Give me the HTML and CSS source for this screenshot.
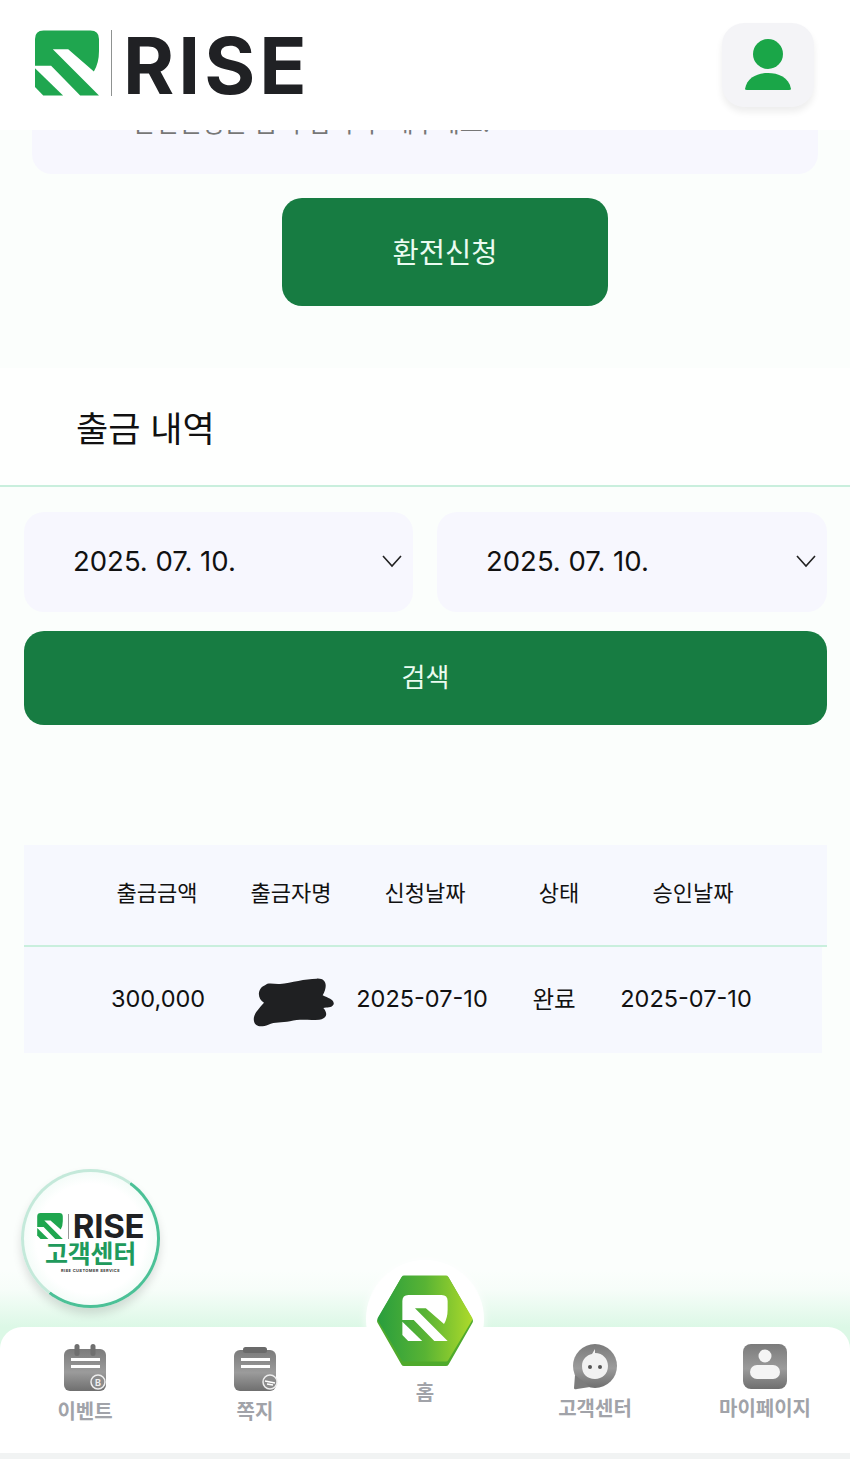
FILE: index.html
```html
<!DOCTYPE html>
<html lang="ko">
  <head>
    <meta charset="utf-8">
    <title>RISE</title>
    <link rel="stylesheet" href="styles.css">
  </head>

  <body>
    <svg class="defs" width="0" height="0">
      <defs>
        <symbol id="r-mark" viewBox="18 15 187 190">
          <path d="M18 40 Q18 15 43 15 L180 15 Q205 15 205 40 L205 75 Q205 110 190 135 L115 70 L70 70 L205 205 L150 205 L65 118 L18 118 Z"/>
          <path d="M18 125 L100 205 L42 205 L18 180 Z"/>
        </symbol>
        <linearGradient id="grey-fill" x1="0" y1="0" x2="0" y2="1">
          <stop offset="0" stop-color="#7b7b7b"/>
          <stop offset="0.55" stop-color="#9b9b9b"/>
          <stop offset="1" stop-color="#6f6f6f"/>
        </linearGradient>
        <linearGradient id="hex-fill" x1="0" y1="0" x2="1" y2="0">
          <stop offset="0" stop-color="#2b9f3d"/>
          <stop offset="0.5" stop-color="#58b334"/>
          <stop offset="1" stop-color="#a9d82b"/>
        </linearGradient>
      </defs>
    </svg>

    <header class="topbar">
      <div class="brand">
        <svg class="brand-mark"><use href="#r-mark"/></svg>
        <span class="brand-rule"></span>
        <span class="brand-name">RISE</span>
      </div>
      <button class="profile-btn">
        <svg width="48" height="52" viewBox="0 0 48 52">
          <circle cx="24" cy="15" r="15" fill="#1aa648"/>
          <path d="M1 50 C3 38 14 34 24 34 C34 34 45 38 47 50 Q47 51 45 51 L3 51 Q1 51 1 50 Z" fill="#1aa648"/>
        </svg>
      </button>
    </header>

    <main class="content">
      <div class="notice">*환전신청은 금액 입력 후 해주세요.</div>
      <button class="exchange-btn">환전신청</button>

      <h2 class="section-title">출금 내역</h2>

      <div class="filters">
        <div class="date-box">
          <span>2025. 07. 10.</span>
          <svg width="22" height="14" viewBox="0 0 22 14"><path d="M2 2 L11 12 L20 2" fill="none" stroke="#222" stroke-width="1.6"/></svg>
        </div>
        <div class="date-box">
          <span>2025. 07. 10.</span>
          <svg width="22" height="14" viewBox="0 0 22 14"><path d="M2 2 L11 12 L20 2" fill="none" stroke="#222" stroke-width="1.6"/></svg>
        </div>
      </div>
      <button class="search-btn">검색</button>

      <section class="history">
        <div class="history-head">
          <span>출금금액</span>
          <span>출금자명</span>
          <span>신청날짜</span>
          <span>상태</span>
          <span>승인날짜</span>
        </div>
        <div class="history-row">
          <span>300,000</span>
          <span class="masked">
            <svg width="85" height="50" viewBox="750 415 255 150">
              <path d="M762 548 C758 528 772 515 792 492 C772 482 770 450 795 440 C805 430 825 438 840 436 C875 432 915 420 950 420 C978 418 985 440 968 470 C985 478 1004 484 1001 497 C995 510 980 505 970 508 C985 525 980 540 958 543 C925 546 900 540 870 548 C845 552 825 550 805 558 C785 566 765 565 762 548 Z" fill="#1f2022"/>
            </svg>
          </span>
          <span>2025-07-10</span>
          <span>완료</span>
          <span>2025-07-10</span>
        </div>
      </section>
    </main>

    <div class="support-badge">
      <div class="support-inner">
        <div class="support-logo">
          <svg class="support-mark"><use href="#r-mark"/></svg>
          <span class="support-rule"></span>
          <span>RISE</span>
        </div>
        <div class="support-title">고객센터</div>
        <div class="support-sub">RISE CUSTOMER SERVICE</div>
      </div>
    </div>

    <div class="nav-wrap">
      <nav class="tabbar">
        <a class="tab">
          <svg width="46" height="48" viewBox="0 0 46 48">
            <rect x="2" y="5" width="42" height="42" rx="6" fill="url(#grey-fill)"/>
            <rect x="12.5" y="0" width="5" height="12" rx="2.5" fill="#6f6f6f"/>
            <rect x="28.5" y="0" width="5" height="12" rx="2.5" fill="#6f6f6f"/>
            <rect x="9" y="14" width="29" height="3" fill="#fff"/>
            <rect x="9" y="21" width="29" height="3" fill="#fff"/>
            <circle cx="36" cy="38" r="7" fill="#8c8c8c" stroke="#eee" stroke-width="1.5"/>
            <text x="36" y="41.5" text-anchor="middle" class="badge-text">B</text>
          </svg>
          <span>이벤트</span>
        </a>
        <a class="tab">
          <svg width="46" height="48" viewBox="0 0 46 48">
            <rect x="2" y="6" width="42" height="41" rx="6" fill="url(#grey-fill)"/>
            <rect x="11" y="3" width="24" height="6" rx="2.5" fill="#6a6a6a"/>
            <rect x="9" y="14" width="29" height="3" fill="#fff"/>
            <rect x="9" y="21" width="29" height="3" fill="#fff"/>
            <circle cx="38" cy="38" r="7" fill="#8c8c8c" stroke="#eee" stroke-width="1.5"/>
            <path d="M33 37 L43 39 M35 40 L41 41" stroke="#fff" stroke-width="1.4"/>
          </svg>
          <span>쪽지</span>
        </a>
        <a class="tab tab-home">
          <span class="home-disc">
            <svg width="98" height="92" viewBox="0 0 98 92">
              <path d="M4 47 L28 5 L70 5 L94 47 L70 89 L28 89 Z" fill="#4faa2c" stroke="#4faa2c" stroke-width="6" stroke-linejoin="round"/>
              <path d="M4 45 L28 4 L70 4 L94 45 L70 85 L28 85 Z" fill="url(#hex-fill)" stroke="url(#hex-fill)" stroke-width="5" stroke-linejoin="round"/>
              <svg x="26" y="21" width="46" height="46" class="home-mark"><use href="#r-mark"/></svg>
            </svg>
          </span>
          <span>홈</span>
        </a>
        <a class="tab tab-raised">
          <svg width="46" height="48" viewBox="0 0 46 48">
            <circle cx="23" cy="23" r="22" fill="url(#grey-fill)"/>
            <path d="M3 32 L2 45 Q2 47 5 46 L18 44 Z" fill="#7c7c7c"/>
            <path d="M23 10 C31 10 36 16 36 23 C36 31 30 36 23 36 C15 36 10 31 10 23 C10 16 15 12 20 11 L23 6 Z" fill="#f1f1f1"/>
            <circle cx="18" cy="24" r="2" fill="#555"/>
            <circle cx="28" cy="24" r="2" fill="#555"/>
          </svg>
          <span>고객센터</span>
        </a>
        <a class="tab tab-raised">
          <svg width="46" height="48" viewBox="0 0 46 48">
            <rect x="1" y="1" width="44" height="45" rx="8" fill="url(#grey-fill)"/>
            <circle cx="23" cy="13" r="6.5" fill="#f4f4f4"/>
            <rect x="8" y="22" width="30" height="14" rx="7" fill="#f4f4f4"/>
          </svg>
          <span>마이페이지</span>
        </a>
      </nav>
      <div class="home-strip"></div>
    </div>
  </body>
</html>
```

FILE: styles.css
```css
* {
  box-sizing: border-box;
}
html, body {
  height: 100%;
}
body {
  margin: 0;
  width: 850px;
  height: 1459px;
  overflow: hidden;
  position: relative;
  display: flex;
  flex-direction: column;
  background: #fbfefc;
  color: #111;
  font-family: Inter, "Noto Sans CJK KR", sans-serif;
}
button {
  border: 0;
  font-family: inherit;
}
.defs {
  position: absolute;
}

/* top bar */
.topbar {
  flex: none;
  height: 130px;
  padding: 22px 36px 0 35px;
  background: #fff;
  display: flex;
  justify-content: space-between;
  align-items: flex-start;
}
.brand {
  display: flex;
  align-items: center;
  margin-top: 8px;
  height: 66px;
}
.brand-mark {
  width: 64px;
  height: 66px;
  fill: #1fa64f;
}
.brand-rule {
  width: 1px;
  height: 66px;
  margin: 0 11px 0 12px;
  background: #8f9291;
}
.brand-name {
  font-size: 78px;
  line-height: 66px;
  font-weight: 700;
  color: #202124;
  letter-spacing: 4px;
  position: relative;
  top: 3px;
}
.profile-btn {
  width: 92px;
  height: 84px;
  margin-top: 1px;
  border-radius: 22px;
  background: #f4f4f7;
  box-shadow: 0 5px 7px rgba(0, 0, 0, 0.07);
  display: flex;
  align-items: center;
  justify-content: center;
}

/* scrolled content */
.content {
  flex: 1;
  min-height: 0;
  overflow: hidden;
}
.notice {
  width: 786px;
  height: 104px;
  margin: -60px 0 0 32px;
  padding: 35px 0 0 88px;
  border-radius: 20px;
  background: #f7f7fe;
  font-size: 25px;
  line-height: 36px;
  color: #777;
  white-space: nowrap;
}
.exchange-btn {
  display: block;
  width: 326px;
  height: 108px;
  margin: 24px 0 0 282px;
  padding: 0 0 4px;
  border-radius: 20px;
  background: #177c42;
  color: #eafbf0;
  font-size: 28.5px;
}
.section-title {
  margin: 62px 0 0;
  height: 119px;
  padding: 37px 0 0 76px;
  background: #fefffe;
  border-bottom: 2px solid #c9efdd;
  font-size: 35px;
  line-height: 48px;
  font-weight: 400;
}
.filters {
  display: grid;
  grid-template-columns: 389px 390px;
  gap: 24px;
  margin: 25px 0 0 24px;
}
.date-box {
  height: 100px;
  border-radius: 20px;
  background: #f7f7fe;
  padding: 0 10px 2px 49px;
  display: flex;
  align-items: center;
  justify-content: space-between;
  font-size: 27.5px;
}
.search-btn {
  display: block;
  width: 803px;
  height: 94px;
  margin: 19px 0 0 24px;
  padding: 0 0 5px;
  border-radius: 20px;
  background: #177c42;
  color: #eafbf0;
  font-size: 26px;
}
.history {
  width: 803px;
  margin: 120px 0 0 24px;
}
.history-head {
  height: 102px;
  padding: 0 0 8px 66px;
  display: grid;
  grid-template-columns: repeat(5, 134px);
  align-items: center;
  text-align: center;
  background: #f6f8fe;
  border-bottom: 2px solid #c9efdd;
  font-size: 22px;
}
.history-row {
  width: 798px;
  height: 106px;
  padding: 0 0 4px 68px;
  display: grid;
  grid-template-columns: repeat(5, 132px);
  align-items: center;
  text-align: center;
  background: #f6f8fe;
  font-size: 23.5px;
  white-space: nowrap;
}
.masked {
  display: flex;
  justify-content: center;
  margin: 8px -2px 0 2px;
}

/* floating support badge */
.support-badge {
  position: absolute;
  left: 21px;
  top: 1169px;
  width: 139px;
  height: 139px;
  padding: 3px;
  border-radius: 50%;
  background: conic-gradient(#c4e9da 0deg 36deg, #4cc197 36deg 217deg, #c4e9da 217deg 360deg);
  box-shadow: 0 6px 10px rgba(0, 0, 0, 0.13);
}
.support-inner {
  height: 100%;
  border-radius: 50%;
  background: radial-gradient(circle, #fff 58%, #dcf6ea 100%);
  display: flex;
  flex-direction: column;
  align-items: center;
  padding-top: 41px;
}
.support-logo {
  display: flex;
  align-items: center;
  height: 26px;
  font-size: 33px;
  line-height: 26px;
  font-weight: 700;
  color: #202124;
  letter-spacing: -0.3px;
}
.support-mark {
  width: 26px;
  height: 26px;
  fill: #1fa64f;
}
.support-rule {
  width: 1px;
  height: 25px;
  margin: 0 4px 0 5px;
  background: #999;
}
.support-title {
  margin-top: 2px;
  font-size: 25px;
  line-height: 26px;
  font-weight: 700;
  color: #209a5c;
  letter-spacing: -0.3px;
}
.support-sub {
  font-size: 4px;
  line-height: 8px;
  font-weight: 700;
  letter-spacing: 0.4px;
  color: #333;
}

/* bottom tabs */
.nav-wrap {
  flex: none;
  height: 189px;
  padding-top: 57px;
  background: linear-gradient(to bottom, rgba(220, 248, 230, 0) 0, rgba(220, 248, 230, 0.15) 20px, rgba(220, 248, 230, 0.6) 40px, #dcf8e6 57px);
  background-size: 100% 90px;
  background-repeat: no-repeat;
}
.tabbar {
  height: 126px;
  display: grid;
  grid-template-columns: repeat(5, 170px);
  background: #fff;
  border-radius: 22px 22px 0 0;
}
.home-strip {
  height: 6px;
  background: #f1f3f3;
}
.tab {
  display: flex;
  flex-direction: column;
  align-items: center;
  padding-top: 17px;
  font-size: 20px;
  line-height: 26px;
  font-weight: 700;
  color: #a1a3a9;
}
.tab svg {
  display: block;
}
.tab > svg {
  margin-bottom: 7px;
}
.tab-raised {
  padding-top: 16px;
}
.tab-raised > svg {
  margin-bottom: 5px;
}
.tab-home {
  padding-top: 0;
  margin-top: -67px;
}
.home-disc {
  width: 118px;
  height: 118px;
  margin-bottom: 2px;
  border-radius: 50%;
  background: #fff;
  box-shadow: 0 0 10px rgba(255, 255, 255, 0.8);
  display: flex;
  justify-content: center;
  padding-top: 14px;
}
.home-mark {
  fill: #fff;
}
.badge-text {
  font-size: 9px;
  font-weight: 700;
  fill: #eee;
}
```
